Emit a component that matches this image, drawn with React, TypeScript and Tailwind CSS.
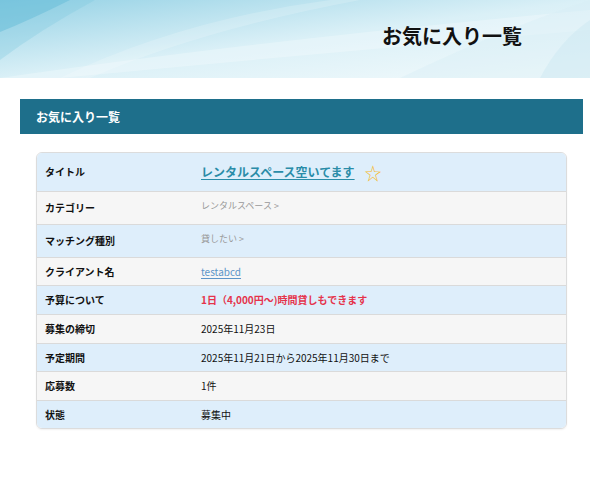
const font = "font-['Noto_Sans_CJK_JP','Noto_Sans',sans-serif]";

type Row = { label: string; lift?: boolean; value: React.ReactNode };

function Header() {
  return (
    <header className="relative h-[78px] overflow-hidden bg-gradient-to-br from-[#95d2e5] via-[#daf0f7] to-[#f3fafc]">
      {/* background swooshes */}
      <svg className="absolute inset-0 h-full w-full" viewBox="0 0 590 78" preserveAspectRatio="none">
        <path d="M0 0 H70 Q30 20 0 32 Z" fill="#5bb8d6" opacity="0.5" />
        <path d="M0 0 H95 Q40 30 0 60 Z" fill="#7cc6df" opacity="0.3" />
        <path d="M60 78 Q180 20 330 0 H360 Q200 30 90 78 Z" fill="#ffffff" opacity="0.18" />
        <path d="M0 78 Q260 40 590 10 V30 Q300 55 60 78 Z" fill="#ffffff" opacity="0.25" />
        <path d="M400 78 Q500 30 590 0 V78 Z" fill="#d6edf5" opacity="0.4" />
        <path d="M540 78 Q560 40 590 20 V78 Z" fill="#c9e7f1" opacity="0.4" />
      </svg>
      <div className="relative flex h-full items-center justify-end pr-[68px] pb-[7px]">
        <h1 className="text-[20px] font-bold text-[#111]">お気に入り一覧</h1>
      </div>
    </header>
  );
}

export default function App() {
  const rows: Row[] = [
    {
      label: "タイトル",
      value: (
        <div className="flex items-center gap-[10px]">
          <a className="text-[12px] font-bold text-[#2a8ca8] underline underline-offset-2">
            レンタルスペース空いてます
          </a>
          <span className="text-[17px] leading-none text-[#f6b92b]">☆</span>
        </div>
      ),
    },
    {
      label: "カテゴリー",
      lift: true,
      value: <span className="text-[9px] text-[#999]">レンタルスペース&nbsp;&gt;</span>,
    },
    {
      label: "マッチング種別",
      lift: true,
      value: <span className="text-[9px] text-[#999]">貸したい&nbsp;&gt;</span>,
    },
    {
      label: "クライアント名",
      value: <a className="text-[10px] text-[#5c95c8] underline underline-offset-2">testabcd</a>,
    },
    {
      label: "予算について",
      value: <span className="font-bold text-[#e5334b]">1日（4,000円〜)時間貸しもできます</span>,
    },
    { label: "募集の締切", value: <span>2025年11月23日</span> },
    { label: "予定期間", value: <span>2025年11月21日から2025年11月30日まで</span> },
    { label: "応募数", value: <span>1件</span> },
    { label: "状態", value: <span>募集中</span> },
  ];

  const heights = ["h-[38px]", "h-[33px]", "h-[33px]", "h-[28px]", "h-[29px]", "h-[29px]", "h-[28px]", "h-[29px]", "h-[28px]"];

  return (
    <div className={`min-h-[492px] bg-white text-[#111] ${font}`}>
      <Header />

      <main className="px-[20px] pt-[21px] pr-[7px]">
        {/* Section title */}
        <div className="flex h-[35px] items-center bg-[#1e6f8b] px-[16px]">
          <h2 className="text-[12px] font-bold text-white">お気に入り一覧</h2>
        </div>

        {/* Detail table */}
        <div className="mt-[18px] ml-[16px] mr-[16px] overflow-hidden rounded-[6px] border border-[#dcdcdc] shadow-[0_1px_2px_rgba(0,0,0,0.06)]">
          {rows.map((row, i) => (
            <div
              key={row.label}
              className={`flex items-center ${heights[i]} ${
                i % 2 === 0 ? "bg-[#deeefb]" : "bg-[#f6f6f6]"
              } ${i > 0 ? "border-t border-[#dadada]" : ""}`}
            >
              <div className="w-[164px] pl-[8px] text-[10px] leading-[14px] font-bold">{row.label}</div>
              <div className={`flex flex-1 items-center text-[10px] leading-[14px] ${row.lift ? "-mt-[4px]" : ""}`}>
                {row.value}
              </div>
            </div>
          ))}
        </div>
      </main>
    </div>
  );
}
